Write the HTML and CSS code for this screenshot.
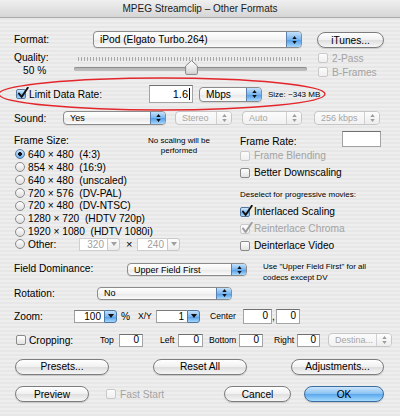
FILE: index.html
```html
<!DOCTYPE html>
<html lang="en">
<head>
<meta charset="utf-8">
<title>MPEG Streamclip – Other Formats</title>
<link rel="stylesheet" href="styles.css">
</head>
<body>
<div class="win">
  <div class="titlebar">MPEG Streamclip – Other Formats</div>

  <div class="row r-format">
    <span class="lbl w79 lh17">Format:</span>
    <div class="popup w209 h17"><span class="ptext">iPod (Elgato Turbo.264)</span><span class="step"><svg class="ud" viewBox="0 0 5 9"><path d="M2.5 0 5 3.3H0zM2.5 9 0 5.7h5z"/></svg></span></div>
    <div class="btn w67 ml15 mt1">iTunes...</div>
  </div>

  <div class="row r-quality">
    <div class="qlabels">
      <div class="ql first">Quality:</div>
      <div class="ql ind">50 %</div>
    </div>
    <div class="slider">
      <div class="ticks"></div>
      <div class="track"></div>
      <svg class="thumb" viewBox="0 0 13 15"><defs><linearGradient id="tg" x1="0" y1="0" x2="0" y2="1"><stop offset="0" stop-color="#ffffff"/><stop offset="1" stop-color="#d4d4d4"/></linearGradient></defs><path d="M6.5 0.6 12.4 6V13.4Q12.4 14.4 11.4 14.4H1.6Q0.6 14.4 0.6 13.4V6Z" fill="url(#tg)" stroke="#858585" stroke-width="1"/></svg>
    </div>
    <div class="qchecks">
      <div class="cbrow dis h14"><span class="cb"></span>2-Pass</div>
      <div class="cbrow dis h14"><span class="cb"></span>B-Frames</div>
    </div>
  </div>

  <div class="row r-limit">
    <div class="cbrow w133"><span class="cb on mr3"><svg class="chk" viewBox="0 0 12 12"><path d="M2 6.5 4.6 10 10.8 0.8"/></svg></span>Limit Data Rate:</div>
    <div class="field w44 h18 f11">1.6<span class="caret"></span></div>
    <div class="popup w63 h15 ml6"><span class="ptext">Mbps</span><span class="step"><svg class="ud" viewBox="0 0 5 9"><path d="M2.5 0 5 3.3H0zM2.5 9 0 5.7h5z"/></svg></span></div>
    <span class="small ml6">Size: ~343 MB</span>
  </div>

  <div class="row r-sound">
    <span class="lbl w49">Sound:</span>
    <div class="popup sm w103 h14"><span class="ptext">Yes</span><span class="step"><svg class="ud" viewBox="0 0 5 9"><path d="M2.5 0 5 3.3H0zM2.5 9 0 5.7h5z"/></svg></span></div>
    <div class="popup sm dis w57 h14 ml9"><span class="ptext">Stereo</span><span class="step"><svg class="ud" viewBox="0 0 5 9"><path d="M2.5 0 5 3.3H0zM2.5 9 0 5.7h5z"/></svg></span></div>
    <div class="popup sm dis w60 h14 ml10"><span class="ptext">Auto</span><span class="step"><svg class="ud" viewBox="0 0 5 9"><path d="M2.5 0 5 3.3H0zM2.5 9 0 5.7h5z"/></svg></span></div>
    <div class="popup sm dis w66 h14 ml12"><span class="ptext">256 kbps</span><span class="step"><svg class="ud" viewBox="0 0 5 9"><path d="M2.5 0 5 3.3H0zM2.5 9 0 5.7h5z"/></svg></span></div>
  </div>

  <div class="mid">
    <div class="left">
      <div class="fshead">
        <span class="lbl w130 lh14">Frame Size:</span>
        <span class="note">No scaling will be performed</span>
      </div>
      <div class="rad"><span class="rb on"></span>640 × 480  (4:3)</div>
      <div class="rad"><span class="rb"></span>854 × 480  (16:9)</div>
      <div class="rad"><span class="rb"></span>640 × 480  (unscaled)</div>
      <div class="rad"><span class="rb"></span>720 × 576  (DV-PAL)</div>
      <div class="rad"><span class="rb"></span>720 × 480  (DV-NTSC)</div>
      <div class="rad"><span class="rb"></span>1280 × 720  (HDTV 720p)</div>
      <div class="rad"><span class="rb"></span>1920 × 1080  (HDTV 1080i)</div>
      <div class="rad"><span class="rb"></span><span class="w51">Other:</span>
        <div class="combo dis w41 h13"><span class="cf">320</span><span class="cbtn"><svg class="dn" viewBox="0 0 6 4"><path d="M0 0h6L3 4z"/></svg></span></div>
        <span class="times">×</span>
        <div class="combo dis w43 h13"><span class="cf">240</span><span class="cbtn"><svg class="dn" viewBox="0 0 6 4"><path d="M0 0h6L3 4z"/></svg></span></div>
      </div>
    </div>
    <div class="right">
      <div class="fr">
        <span class="lbl w102 frl">Frame Rate:</span>
        <div class="field w39 h16"></div>
      </div>
      <div class="cbrow dis h17"><span class="cb"></span>Frame Blending</div>
      <div class="cbrow h17"><span class="cb"></span>Better Downscaling</div>
      <div class="desel">Deselect for progressive movies:</div>
      <div class="cbrow h17"><span class="cb on"><svg class="chk" viewBox="0 0 12 12"><path d="M2 6.5 4.6 10 10.8 0.8"/></svg></span>Interlaced Scaling</div>
      <div class="cbrow dis h17"><span class="cb dchk"><svg class="chk" viewBox="0 0 12 12"><path d="M2 6.5 4.6 10 10.8 0.8"/></svg></span>Reinterlace Chroma</div>
      <div class="cbrow h17"><span class="cb"></span>Deinterlace Video</div>
    </div>
  </div>

  <div class="row r-fd">
    <span class="lbl w113 fdl">Field Dominance:</span>
    <div class="popup sm w120 h13 fdp"><span class="ptext">Upper Field First</span><span class="step"><svg class="ud" viewBox="0 0 5 9"><path d="M2.5 0 5 3.3H0zM2.5 9 0 5.7h5z"/></svg></span></div>
    <div class="fdnote">Use "Upper Field First" for all<br>codecs except DV</div>
  </div>

  <div class="row r-rot">
    <span class="lbl w83">Rotation:</span>
    <div class="popup sm w135 h13"><span class="ptext">No</span><span class="step"><svg class="ud" viewBox="0 0 5 9"><path d="M2.5 0 5 3.3H0zM2.5 9 0 5.7h5z"/></svg></span></div>
  </div>

  <div class="row r-zoom">
    <span class="lbl w60">Zoom:</span>
    <div class="combo w43 h13"><span class="cf">100</span><span class="cbtn"><svg class="dn" viewBox="0 0 6 4"><path d="M0 0h6L3 4z"/></svg></span></div>
    <span class="lbl w17 ml4">%</span>
    <span class="lbl sl w18">X/Y</span>
    <div class="combo w44 h13"><span class="cf">1</span><span class="cbtn"><svg class="dn" viewBox="0 0 6 4"><path d="M0 0h6L3 4z"/></svg></span></div>
    <span class="lbl sl w33 ml10">Center</span>
    <div class="field w29 h15">0</div>
    <span class="lbl w4">,</span>
    <div class="field w24 h15">0</div>
  </div>

  <div class="row r-crop">
    <div class="cbrow w84"><span class="cb mr3"></span>Cropping:</div>
    <span class="lbl sl w19">Top</span>
    <div class="field w24 h13">0</div>
    <span class="lbl sl w18 ml17">Left</span>
    <div class="field w25 h13">0</div>
    <span class="lbl sl w30 ml6">Bottom</span>
    <div class="field w24 h13">0</div>
    <span class="lbl sl w23 ml11">Right</span>
    <div class="field w23 h13">0</div>
    <div class="popup sm dis w64 h14 ml8"><span class="ptext">Destina...</span><span class="step"><svg class="ud" viewBox="0 0 5 9"><path d="M2.5 0 5 3.3H0zM2.5 9 0 5.7h5z"/></svg></span></div>
  </div>

  <div class="row r-btn1">
    <div class="btn w94">Presets...</div>
    <div class="btn w94 ml44">Reset All</div>
    <div class="btn w93 ml44">Adjustments...</div>
  </div>

  <div class="row r-btn2">
    <div class="btn w74">Preview</div>
    <div class="cbrow dis ml17"><span class="cb"></span>Fast Start</div>
    <div class="btn w67 push">Cancel</div>
    <div class="btn ok w80 ml13">OK</div>
  </div>

  <svg class="ring" viewBox="0 0 400 416"><ellipse cx="162" cy="94" rx="163" ry="16"/></svg>
</div>
</body>
</html>
```

FILE: styles.css
```css
* { box-sizing: border-box; }
html, body { margin: 0; padding: 0; }
body {
  width: 400px; height: 416px; overflow: hidden;
  font-family: "Liberation Sans", Arial, sans-serif;
  font-size: 10.2px; color: #000;
}
.win {
  position: relative; width: 400px; height: 416px;
  background: repeating-linear-gradient(to bottom, #eeeeee 0, #eeeeee 2px, #e7e7e7 2px, #e7e7e7 4px);
}
.titlebar {
  height: 18px; line-height: 17px; text-align: center; font-size: 10px; color: #1a1a1a;
  background: linear-gradient(#efefef, #d6d6d6);
  border-bottom: 1px solid #a9a9a9;
}
.row { display: flex; align-items: center; padding-left: 14px; }
.lbl { flex: none; white-space: nowrap; }
.small { font-size: 8px; white-space: nowrap; }
.sl { font-size: 8.6px; }

/* widths */
.w4 { width: 4px; } .w17 { width: 17px; } .w18 { width: 18px; } .w19 { width: 19px; }
.w23 { width: 23px; } .w24 { width: 24px; } .w25 { width: 25px; } .w29 { width: 29px; }
.w30 { width: 30px; } .w33 { width: 33px; } .w39 { width: 39px; } .w41 { width: 41px; }
.w43 { width: 43px; } .w44 { width: 44px; } .w49 { width: 49px; } .w51 { width: 51px; flex: none; }
.w57 { width: 57px; } .w60 { width: 60px; } .w63 { width: 63px; } .w64 { width: 64px; }
.w66 { width: 66px; } .w67 { width: 67px; } .w74 { width: 74px; } .w79 { width: 79px; }
.w80 { width: 80px; } .w83 { width: 83px; } .w84 { width: 84px; } .w93 { width: 93px; }
.w94 { width: 94px; } .w102 { width: 102px; } .w103 { width: 103px; } .w113 { width: 113px; }
.w120 { width: 120px; } .w130 { width: 130px; } .w133 { width: 133px; } .w135 { width: 135px; }
.w209 { width: 209px; }
.h13 { height: 13px; } .h14 { height: 14px; } .h15 { height: 15px; } .h16 { height: 16px; }
.h17 { height: 17px; } .h18 { height: 18px; }
.ml4 { margin-left: 4px; } .ml6 { margin-left: 6px; } .ml8 { margin-left: 8px; } .ml9 { margin-left: 9px; }
.ml10 { margin-left: 10px; } .ml11 { margin-left: 11px; } .ml12 { margin-left: 12px; } .ml13 { margin-left: 13px; }
.ml15 { margin-left: 15px; } .ml17 { margin-left: 17px; } .ml44 { margin-left: 44px; }
.mt1 { margin-top: 1px; } .mr3 { margin-right: 3px !important; }
.lh14 { line-height: 14px; } .lh17 { line-height: 17px; }
.push { margin-left: auto; }

/* popup buttons */
.popup {
  flex: none; display: flex; align-items: stretch;
  border: 1px solid #8b8b8b; border-radius: 4px; overflow: hidden;
  background: linear-gradient(#ffffff, #f3f3f3 50%, #e7e7e7 51%, #fbfbfb);
  box-shadow: 0 1px 0 rgba(0,0,0,0.08);
}
.popup .ptext { flex: 1; display: flex; align-items: center; padding-left: 6px; white-space: nowrap; overflow: hidden; }
.popup.sm .ptext { font-size: 9px; }
.popup .step {
  width: 15px; flex: none; display: flex; align-items: center; justify-content: center;
  background: linear-gradient(#c4e1fb, #79b6ef 50%, #4f9ae6 51%, #a6d7fc);
  border-left: 1px solid #5b80ab;
}
.ud { width: 5px; height: 8px; fill: #111; }
.popup.dis { border-color: #c6c6c6; box-shadow: none; background: linear-gradient(#fbfbfb, #f1f1f1); }
.popup.dis .ptext { color: #a6a6a6; }
.popup.dis .step { background: linear-gradient(#fdfdfd, #ededed); border-left-color: #d0d0d0; }
.popup.dis .ud { fill: #9c9c9c; }

/* push buttons */
.btn {
  flex: none; height: 16px; display: flex; align-items: center; justify-content: center;
  border: 1px solid #7d7d7d; border-radius: 8px;
  background: linear-gradient(#ffffff, #f0f0f0 50%, #dedede 51%, #f6f6f6);
  box-shadow: 0 1px 1px rgba(0,0,0,0.15);
  white-space: nowrap;
}
.btn.ok {
  border-color: #3c6c9f;
  background: linear-gradient(#cde6fb, #86c0f2 50%, #5aa6ec 51%, #a3dcfd);
}

/* text fields */
.field {
  flex: none; background: #fff;
  border: 1px solid #a3a3a3; border-top-color: #6f6f6f;
  display: flex; align-items: center; justify-content: flex-end;
  padding-right: 3px; font-size: 10px; line-height: 1;
}
.f11 { font-size: 11px; padding-right: 2px; }
.caret { display: inline-block; width: 1px; height: 12px; background: #000; margin-left: 1px; }

/* combo boxes */
.combo { flex: none; display: flex; }
.combo .cf {
  flex: 1; background: #fff; border: 1px solid #a0a0a0; border-top-color: #7a7a7a; border-right: none;
  display: flex; align-items: center; justify-content: flex-end; padding-right: 3px; font-size: 10px;
}
.combo .cbtn {
  width: 13px; flex: none; display: flex; align-items: center; justify-content: center;
  border: 1px solid #4d77a5; border-radius: 0 3px 3px 0;
  background: linear-gradient(#c4e1fb, #79b6ef 50%, #4f9ae6 51%, #a6d7fc);
}
.dn { width: 6px; height: 4px; fill: #111; }
.combo.dis .cf { color: #a0a0a0; border-color: #cfcfcf; }
.combo.dis .cbtn { border-color: #c8c8c8; background: linear-gradient(#fdfdfd, #ececec); }
.combo.dis .dn { fill: #a0a0a0; }

/* checkboxes */
.cbrow { display: flex; align-items: center; white-space: nowrap; flex: none; }
.cb {
  position: relative; flex: none; width: 10px; height: 10px; margin-right: 4px;
  border: 1px solid #8a8a8a; border-radius: 2px;
  background: linear-gradient(#ffffff, #e2e2e2);
}
.cb.on { border-color: #55779f; background: linear-gradient(#d3e8fc, #89c0f1 50%, #5fa1e6 51%, #b0dafc); }
.chk { position: absolute; left: -0.5px; top: -3px; width: 12px; height: 12px; fill: none; stroke: #111; stroke-width: 1.9; stroke-linecap: round; stroke-linejoin: round; }
.dis { color: #a3a3a3; }
.dis .cb { border-color: #c9c9c9; background: linear-gradient(#fcfcfc, #efefef); }
.cb.dchk .chk { stroke: #9a9a9a; }

/* radios */
.rad { height: 12.86px; display: flex; align-items: center; white-space: pre; }
.rb {
  flex: none; width: 10px; height: 10px; margin-left: 1px; margin-right: 3px; border-radius: 50%;
  border: 1px solid #8a8a8a; background: linear-gradient(#ffffff, #dedede);
}
.rb.on {
  border-color: #55779f;
  background: radial-gradient(circle, #111 0, #111 1.6px, transparent 2.2px), linear-gradient(#cde5fb, #6eaeec);
}
.times { width: 11px; margin-left: 6px; flex: none; font-size: 11px; }

/* rows */
.r-format { height: 30px; padding-top: 13px; align-items: flex-start; }
.r-quality { height: 32px; align-items: flex-start; }
.qlabels { width: 60px; flex: none; }
.ql { line-height: 13px; }
.ql.first { margin-top: 3px; }
.ql.ind { padding-left: 9px; }
.slider { position: relative; width: 233px; height: 32px; flex: none; }
.ticks {
  margin: 9px 5px 0 4px; height: 4px;
  background: repeating-linear-gradient(to right, #a9a9a9 0, #a9a9a9 1px, transparent 1px, transparent 3px);
}
.track { margin-top: 6px; height: 4px; border-radius: 2px; background: #bcbcbc; box-shadow: inset 0 1px 1px #8a8a8a; }
.thumb { position: absolute; left: 111px; top: 12px; width: 13px; height: 15px; }
.qchecks { margin-left: 11px; margin-top: 3px; }

.r-limit { height: 28px; padding-left: 16px; }
.r-sound { height: 20px; }

.mid { display: flex; height: 127px; padding-left: 14px; }
.left { width: 225px; flex: none; }
.fshead { display: flex; align-items: flex-start; height: 14px; margin-top: 6px; }
.note { width: 70px; flex: none; font-size: 8px; line-height: 10px; margin-top: 2px; text-align: center; }
.right { flex: 1; padding-left: 1px; }
.fr { display: flex; align-items: flex-start; height: 16px; margin-top: 3px; }
.frl { line-height: 12px; margin-top: 5px; }
.desel { height: 22px; padding-top: 8px; font-size: 8px; line-height: 11px; white-space: nowrap; }

.r-fd { height: 27px; align-items: flex-start; }
.fdl { line-height: 13px; margin-top: 6.5px; }
.fdp { margin-top: 8px; }
.fdnote { margin-left: 16px; margin-top: 5.5px; font-size: 8px; line-height: 11px; white-space: nowrap; }
.r-rot { height: 22px; }
.r-zoom { height: 24px; }
.r-crop { height: 24px; padding-left: 16px; }
.r-btn1 { height: 29px; padding-left: 15px; }
.r-btn2 { height: 26px; padding-left: 15px; padding-right: 16px; }

.ring { position: absolute; left: 0; top: 0; width: 400px; height: 416px; pointer-events: none; overflow: visible; }
.ring ellipse { fill: none; stroke: #e3262b; stroke-width: 1.4; }
```
